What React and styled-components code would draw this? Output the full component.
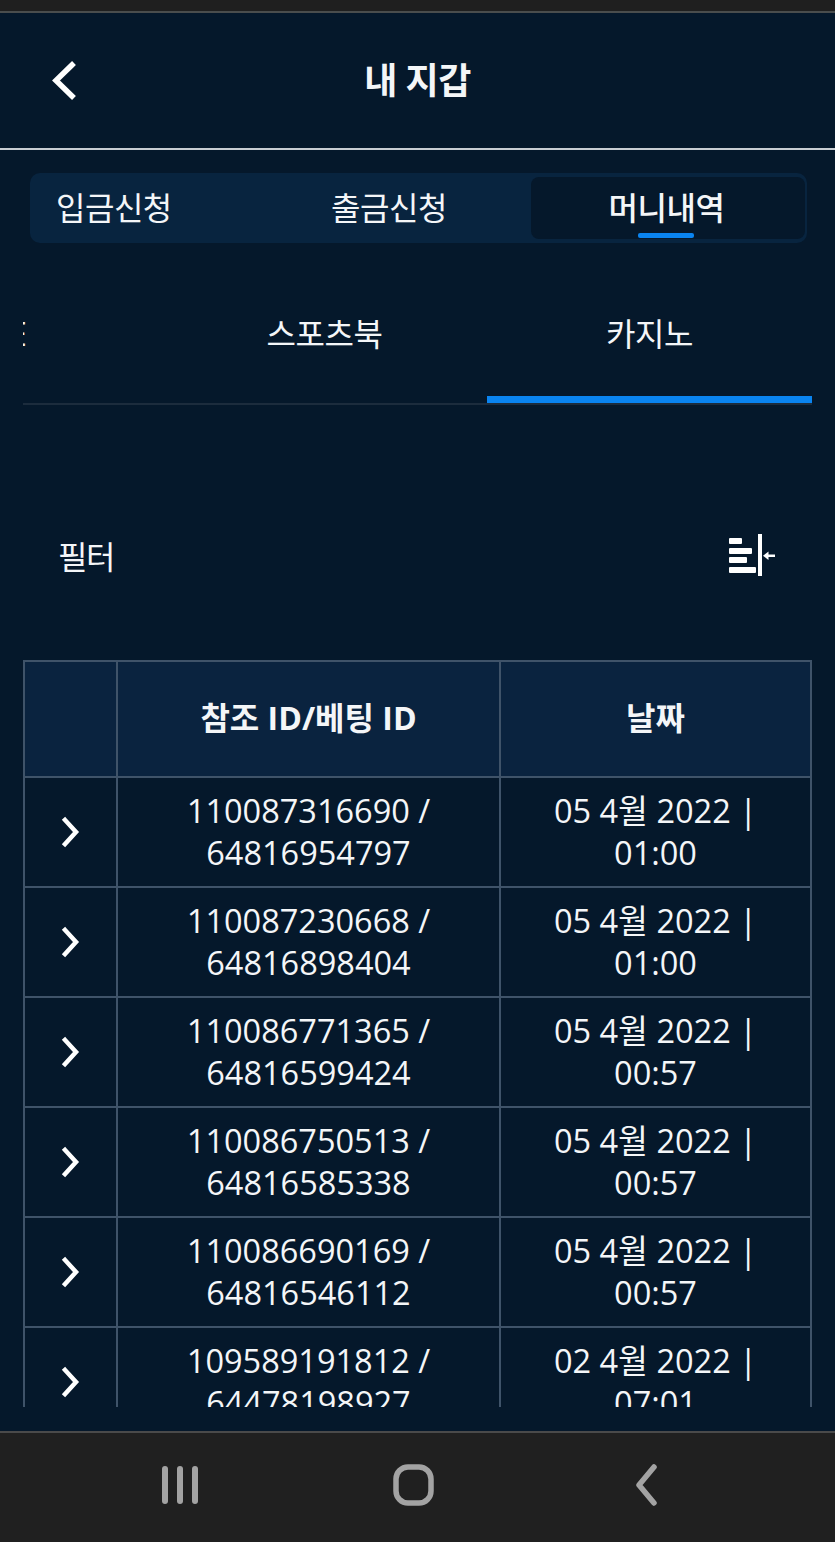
import React from "react";
import styled, { createGlobalStyle } from "styled-components";

const rows = [
	["110087316690", "64816954797", "05 4월 2022", "01:00"],
	["110087230668", "64816898404", "05 4월 2022", "01:00"],
	["110086771365", "64816599424", "05 4월 2022", "00:57"],
	["110086750513", "64816585338", "05 4월 2022", "00:57"],
	["110086690169", "64816546112", "05 4월 2022", "00:57"],
	["109589191812", "64478198927", "02 4월 2022", "07:01"],
];

function App() {
	return (
		<Page>
			<GlobalStyle />
			<StatusBar />
			<Header>
				<BackButton>
					<svg width="30" height="40" viewBox="0 0 30 40" fill="none">
						<path d="M23 5 L7 20.5 L23 36" stroke="#fff" strokeWidth="5.5" strokeLinecap="square" />
					</svg>
				</BackButton>
				<Title>내 지갑</Title>
			</Header>
			<Main>
				<WalletTabs>
					<WalletTab $width="214px" $left>입금신청</WalletTab>
					<WalletTab $width="284px">출금신청</WalletTab>
					<WalletTab $width="274px" $active>머니내역</WalletTab>
				</WalletTabs>
				<GameTabs>
					<GameTabTrack>
						<GameTab $clipped>LIVE</GameTab>
						<GameTab>스포츠북</GameTab>
						<GameTab $active>카지노</GameTab>
					</GameTabTrack>
				</GameTabs>
				<FilterRow>
					<FilterLabel>필터</FilterLabel>
					<svg width="48" height="44" viewBox="0 0 48 44" fill="#fff">
						<rect x="1" y="5" width="13" height="6" rx="1" />
						<rect x="1" y="15" width="23" height="6" rx="1" />
						<rect x="1" y="24" width="18" height="6" rx="1" />
						<rect x="1" y="34" width="27" height="6" rx="1" />
						<rect x="30" y="1" width="4" height="42" />
						<rect x="37" y="21.5" width="10" height="2.5" />
						<path d="M35 22.75 L40.5 18.5 V27 Z" />
					</svg>
				</FilterRow>
				<TableClip>
					<Table>
						<colgroup>
							<col width="93" />
							<col width="383" />
							<col width="311" />
						</colgroup>
						<thead>
							<tr>
								<HeadCell />
								<HeadCell>참조 ID/베팅 ID</HeadCell>
								<HeadCell>날짜</HeadCell>
							</tr>
						</thead>
						<tbody>
							{rows.map((row) => (
								<tr key={row[0]}>
									<Cell>
										<Chevron viewBox="0 0 20 32" fill="none">
											<path d="M4 4 L15 16 L4 28" stroke="#fff" strokeWidth="4.5" strokeLinecap="square" />
										</Chevron>
									</Cell>
									<Cell>
										{row[0]} /<br />
										{row[1]}
									</Cell>
									<Cell>
										{row[2]} |<br />
										{row[3]}
									</Cell>
								</tr>
							))}
						</tbody>
					</Table>
				</TableClip>
			</Main>
			<NavBar>
				<svg width="38" height="40" viewBox="0 0 38 40" fill="#a3a3a3">
					<rect x="1" y="1" width="6" height="38" rx="3" />
					<rect x="16" y="1" width="6" height="38" rx="3" />
					<rect x="31" y="1" width="6" height="38" rx="3" />
				</svg>
				<svg width="42" height="42" viewBox="0 0 42 42" fill="none">
					<rect x="3" y="3" width="35" height="36" rx="12" stroke="#a3a3a3" strokeWidth="5.5" />
				</svg>
				<svg width="26" height="42" viewBox="0 0 26 42" fill="none">
					<path d="M21 3 L6 21 L21 39" stroke="#a3a3a3" strokeWidth="5.5" strokeLinecap="round" strokeLinejoin="round" />
				</svg>
			</NavBar>
		</Page>
	);
}

export default App;

const GlobalStyle = createGlobalStyle`
	html, body {
		margin: 0;
		background: #05182b;
	}

	* {
		box-sizing: border-box;
	}
`;

const Page = styled.div`
	width: 835px;
	height: 1542px;
	display: flex;
	flex-direction: column;
	overflow: hidden;
	background: #05182b;
	color: #f4f6f8;
	font-family: "Open Sans", "Noto Sans CJK KR", sans-serif;
`;

const StatusBar = styled.div`
	height: 13px;
	flex: none;
	background: #1f1f1f;
	border-bottom: 2px solid #4a4d4d;
`;

const Header = styled.header`
	height: 137px;
	flex: none;
	display: flex;
	align-items: center;
	justify-content: center;
	position: relative;
	padding-bottom: 4px;
	border-bottom: 2px solid #c9ced3;
`;

const BackButton = styled.div`
	position: absolute;
	left: 49px;
	top: 47px;
	line-height: 0;
`;

const Title = styled.h1`
	margin: 0;
	font-size: 36px;
	font-weight: 700;
	letter-spacing: -0.5px;
`;

const Main = styled.main`
	flex: 1;
	min-height: 0;
	display: flex;
	flex-direction: column;
	padding: 23px 23px 0;
`;

const WalletTabs = styled.div`
	width: 777px;
	height: 70px;
	margin-left: 7px;
	flex: none;
	display: flex;
	padding: 4px 1px 4px 3px;
	border-radius: 10px;
	background: #08243f;
`;

const WalletTab = styled.div`
	flex: 0 0 ${(p) => p.$width};
	position: relative;
	display: flex;
	align-items: center;
	justify-content: ${(p) => (p.$left ? "flex-start" : "center")};
	padding-left: ${(p) => (p.$left ? "23px" : "0")};
	padding-right: ${(p) => (p.$active ? "3px" : "0")};
	padding-bottom: 4px;
	border-radius: 8px;
	font-size: 32px;
	letter-spacing: -0.5px;
	font-weight: ${(p) => (p.$active ? 500 : 400)};
	background: ${(p) => (p.$active ? "#05182b" : "transparent")};

	&::after {
		content: "";
		display: ${(p) => (p.$active ? "block" : "none")};
		position: absolute;
		left: 107px;
		bottom: 1px;
		width: 56px;
		height: 5px;
		border-radius: 2px;
		background: #0a84f0;
	}
`;

const GameTabs = styled.div`
	height: 162px;
	flex: none;
	overflow: hidden;
	border-bottom: 2px solid #1c2c3d;
`;

const GameTabTrack = styled.div`
	display: flex;
	margin-left: -186px;
`;

const GameTab = styled.div`
	flex: 0 0 325px;
	height: 160px;
	padding-top: 68px;
	padding-right: ${(p) => (p.$clipped ? "7px" : "0")};
	text-align: center;
	font-size: 32px;
	line-height: 46px;
	letter-spacing: -0.5px;
	border-bottom: 7px solid ${(p) => (p.$active ? "#0a84f0" : "transparent")};
`;

const FilterRow = styled.div`
	height: 255px;
	flex: none;
	display: flex;
	align-items: center;
	justify-content: space-between;
	padding: 44px 36px 0 35px;
`;

const FilterLabel = styled.span`
	font-size: 32px;
	letter-spacing: -1.5px;
`;

const TableClip = styled.div`
	height: 747px;
	flex: none;
	overflow: hidden;
`;

const Table = styled.table`
	width: 789px;
	table-layout: fixed;
	border-collapse: collapse;
	border: 2px solid #3f5369;
`;

const HeadCell = styled.th`
	height: 116px;
	padding: 0 0 6px;
	background: #0a233f;
	border: 2px solid #3f5369;
	font-size: 32px;
	font-weight: 700;
	text-align: center;
`;

const Cell = styled.td`
	height: 110px;
	padding: 0;
	border: 2px solid #3f5369;
	font-size: 32.5px;
	line-height: 42.5px;
	text-align: center;
`;

const Chevron = styled.svg`
	display: block;
	width: 20px;
	height: 32px;
	margin: 0 auto;
	position: relative;
	top: 0;
`;

const NavBar = styled.nav`
	height: 111px;
	flex: none;
	display: flex;
	align-items: center;
	background: #202020;
	border-top: 2px solid #4a4a4a;
	padding: 0 176px 6px 161px;
	justify-content: space-between;

	svg:nth-child(2) {
		position: relative;
		left: -2px;
	}
`;
